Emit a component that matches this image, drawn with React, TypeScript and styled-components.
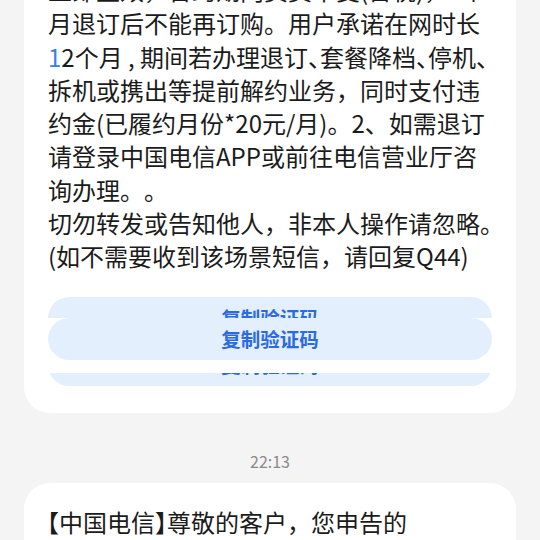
import React from "react";
import styled, { createGlobalStyle } from "styled-components";

const GlobalStyle = createGlobalStyle`
  html, body {
    margin: 0;
    padding: 0;
    background: #f4f4f4;
  }
  body {
    font-family: "Noto Sans CJK SC", "Noto Sans", sans-serif;
  }
`;

const Page = styled.div`
  width: 540px;
  height: 540px;
  overflow: hidden;
  background: #f4f4f4;
`;

const Thread = styled.div`
  display: flex;
  flex-direction: column;
  margin-top: -49px;
`;

const Bubble = styled.div`
  margin: 0 24px;
  background: #ffffff;
  border-radius: 26px;
  padding: 22px 24px 27px;
`;

const Body = styled.div`
  color: #1b1b1b;
  font-size: 24px;
  line-height: 33.3px;
  text-spacing-trim: space-all;
`;

const Line = styled.div`
  white-space: nowrap;
`;

const Link = styled.span`
  color: #3382ee;
`;

// punctuation cell: half width where the phone's font squeezes it, full otherwise
const Punct = styled.span<{ $half?: boolean; $right?: boolean }>`
  display: inline-block;
  width: ${(p) => (p.$half ? "0.5em" : "1em")};
  overflow: hidden;
  vertical-align: top;
  text-indent: ${(p) => (p.$right ? "-0.5em" : "0")};
`;

const ButtonStack = styled.div`
  display: flex;
  flex-direction: column;
  margin-top: 24px;
`;

const Slice = styled.div<{ $h: number; $bottom?: boolean }>`
  flex-shrink: 0;
  height: ${(p) => p.$h}px;
  overflow: hidden;
  display: flex;
  flex-direction: column;
  justify-content: ${(p) => (p.$bottom ? "flex-end" : "flex-start")};
`;

const Gap = styled.div`
  flex-shrink: 0;
  height: 13px;
`;

const CopyButton = styled.div`
  flex-shrink: 0;
  height: 42px;
  border-radius: 21px;
  background: #e4effd;
  color: #2b6ae0;
  font-size: 19.5px;
  font-weight: 600;
  display: flex;
  align-items: center;
  justify-content: center;
`;

const Time = styled.div`
  margin-top: 37px;
  height: 22px;
  line-height: 22px;
  text-align: center;
  color: #8a8a8a;
  font-size: 16px;
`;

const NextBubble = styled(Bubble)`
  margin-top: 11px;
  padding-left: 23px;
`;

export default function App() {
  return (
    <Page>
      <GlobalStyle />
      <Thread>
        <Bubble>
          <Body>
            <Line>立即生效，合约期内资费不变(含税)，1个</Line>
            <Line>月退订后不能再订购。用户承诺在网时长</Line>
            <Line>
              <Link>1</Link>2个月&nbsp;,&nbsp;期间若办理退订<Punct $half>、</Punct>套餐降档
              <Punct $half>、</Punct>停机<Punct $half>、</Punct>
            </Line>
            <Line>拆机或携出等提前解约业务，同时支付违</Line>
            <Line>约金(已履约月份*20元/月)。2、如需退订</Line>
            <Line>请登录中国电信APP或前往电信营业厅咨</Line>
            <Line>
              询办理<Punct>。</Punct>
              <Punct>。</Punct>
            </Line>
            <Line>切勿转发或告知他人，非本人操作请忽略。</Line>
            <Line>(如不需要收到该场景短信，请回复Q44)</Line>
          </Body>
          <ButtonStack>
            <Slice $h={21}>
              <CopyButton>复制验证码</CopyButton>
            </Slice>
            <CopyButton>复制验证码</CopyButton>
            <Gap />
            <Slice $h={13} $bottom>
              <CopyButton>复制验证码</CopyButton>
            </Slice>
          </ButtonStack>
        </Bubble>
        <Time>22:13</Time>
        <NextBubble>
          <Body>
            <Line>
              <Punct $half $right>【</Punct>中国电信<Punct $half>】</Punct>尊敬的客户，您申告的
            </Line>
          </Body>
        </NextBubble>
      </Thread>
    </Page>
  );
}
